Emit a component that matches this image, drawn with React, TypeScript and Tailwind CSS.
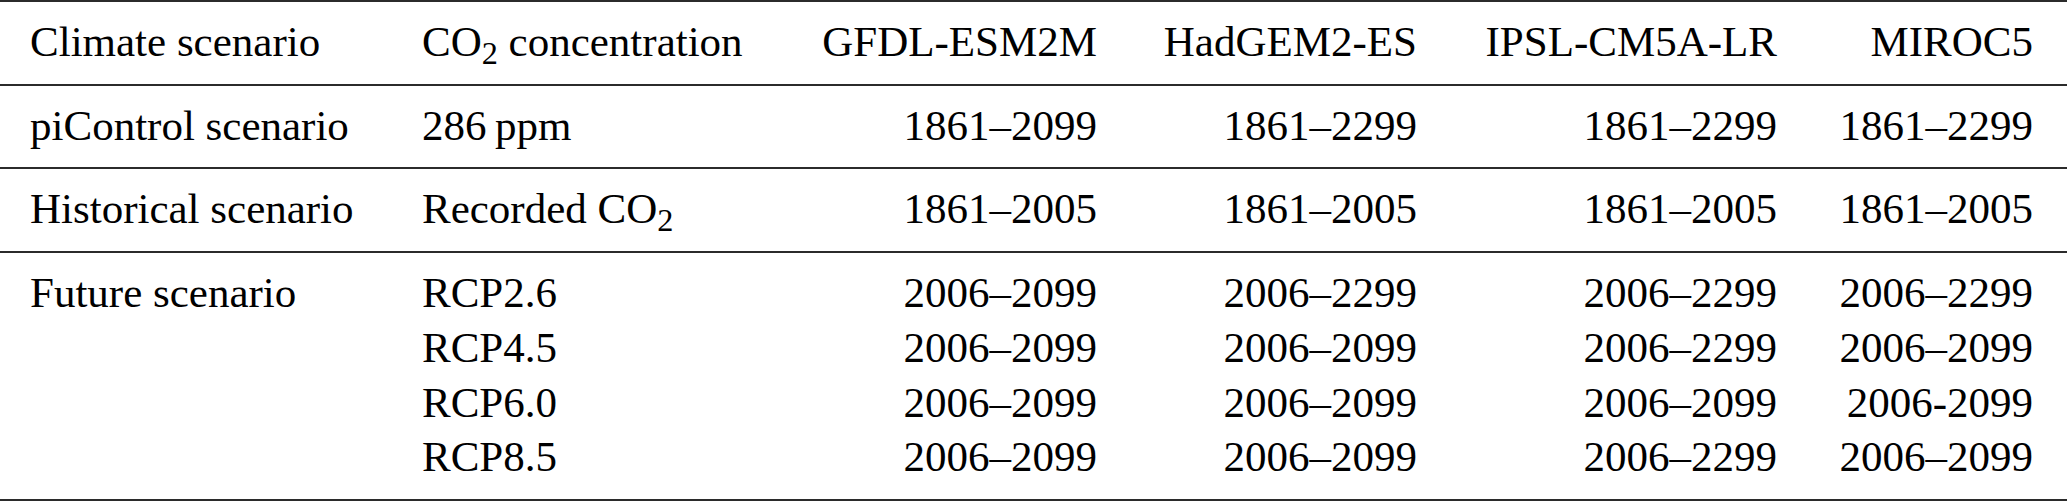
import React from "react";

type Row = {
  scenario: string;
  co2: React.ReactNode[];
  cells: string[][];
};

const rows: Row[] = [
  {
    scenario: "piControl scenario",
    co2: ["286\u2009ppm"],
    cells: [["1861–2099"], ["1861–2299"], ["1861–2299"], ["1861–2299"]],
  },
  {
    scenario: "Historical scenario",
    co2: [
      <>
        Recorded CO<sub>2</sub>
      </>,
    ],
    cells: [["1861–2005"], ["1861–2005"], ["1861–2005"], ["1861–2005"]],
  },
  {
    scenario: "Future scenario",
    co2: ["RCP2.6", "RCP4.5", "RCP6.0", "RCP8.5"],
    cells: [
      ["2006–2099", "2006–2099", "2006–2099", "2006–2099"],
      ["2006–2299", "2006–2099", "2006–2099", "2006–2099"],
      ["2006–2299", "2006–2299", "2006–2099", "2006–2299"],
      ["2006–2299", "2006–2099", "2006-2099", "2006–2099"],
    ],
  },
];

const models = ["GFDL-ESM2M", "HadGEM2-ES", "IPSL-CM5A-LR", "MIROC5"];

const gridCols =
  "grid grid-cols-[392px_378px_297px_320px_360px_256px] pl-[30px] pt-[13px] pb-[14px] border-b-2 border-[#2b2b2b]";

export default function App() {
  return (
    <div className="font-serif w-full h-[502px] bg-white text-black text-[43px] leading-[54.7px]">
      <div className="border-t-2 border-[#2b2b2b] [font-family:Liberation_Serif,serif]">
        <div className={gridCols}>
          <div>Climate scenario</div>
          <div>
            CO<sub>2</sub> concentration
          </div>
          {models.map((m) => (
            <div key={m} className="text-right">
              {m}
            </div>
          ))}
        </div>
        {rows.map((row) => (
          <div key={row.scenario} className={gridCols}>
            <div>{row.scenario}</div>
            <div className="flex flex-col">
              {row.co2.map((c, i) => (
                <div key={i}>{c}</div>
              ))}
            </div>
            {row.cells.map((col, ci) => (
              <div key={ci} className="flex flex-col text-right">
                {col.map((v, vi) => (
                  <div key={vi}>{v}</div>
                ))}
              </div>
            ))}
          </div>
        ))}
      </div>
    </div>
  );
}
